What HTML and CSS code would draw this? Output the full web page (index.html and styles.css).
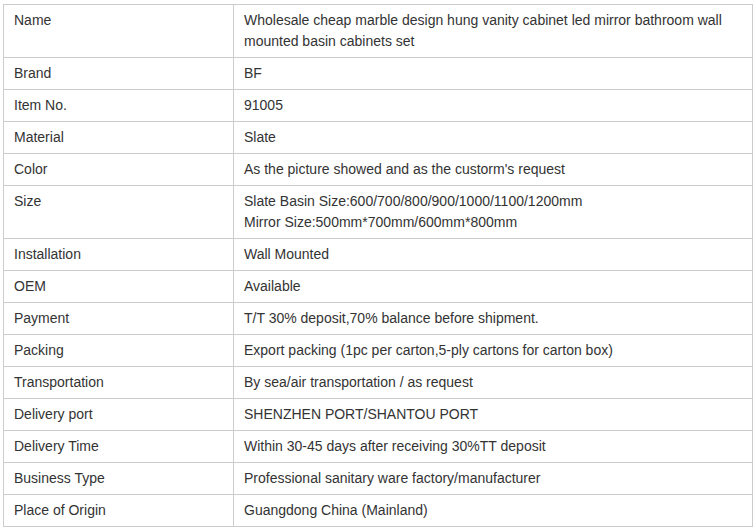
FILE: index.html
```html
<!DOCTYPE html>
<html>
<head>
<meta charset="utf-8">
<link rel="stylesheet" href="styles.css">
</head>
<body>
<table class="spec">
<colgroup><col class="c1"><col class="c2"></colgroup>
<tbody>
<tr><td>Name</td><td>Wholesale cheap marble design hung vanity cabinet led mirror bathroom wall mounted basin cabinets set</td></tr>
<tr><td>Brand</td><td>BF</td></tr>
<tr><td>Item No.</td><td>91005</td></tr>
<tr><td>Material</td><td>Slate</td></tr>
<tr><td>Color</td><td>As the picture showed and as the custorm's request</td></tr>
<tr><td>Size</td><td>Slate Basin Size:600/700/800/900/1000/1100/1200mm<br>Mirror Size:500mm*700mm/600mm*800mm</td></tr>
<tr><td>Installation</td><td>Wall Mounted</td></tr>
<tr><td>OEM</td><td>Available</td></tr>
<tr><td>Payment</td><td>T/T 30% deposit,70% balance before shipment.</td></tr>
<tr><td>Packing</td><td>Export packing (1pc per carton,5-ply cartons for carton box)</td></tr>
<tr><td>Transportation</td><td>By sea/air transportation / as request</td></tr>
<tr><td>Delivery port</td><td>SHENZHEN PORT/SHANTOU PORT</td></tr>
<tr><td>Delivery Time</td><td>Within 30-45 days after receiving 30%TT deposit</td></tr>
<tr><td>Business Type</td><td>Professional sanitary ware factory/manufacturer</td></tr>
<tr><td>Place of Origin</td><td>Guangdong China (Mainland)</td></tr>
</tbody>
</table>
</body>
</html>
```
FILE: styles.css
```css
html, body {
  margin: 0;
  padding: 0;
  background: #fff;
}
body {
  padding: 4px 0 0 3px;
  font-family: "Liberation Sans", Arial, sans-serif;
  font-size: 14px;
  color: #333;
}
.spec {
  border-collapse: collapse;
  table-layout: fixed;
  width: 750px;
}
.spec .c1 { width: 230px; }
.spec td {
  border: 1px solid #ccc;
  padding: 5px 10px;
  line-height: 21px;
  vertical-align: top;
  text-align: left;
}
```
